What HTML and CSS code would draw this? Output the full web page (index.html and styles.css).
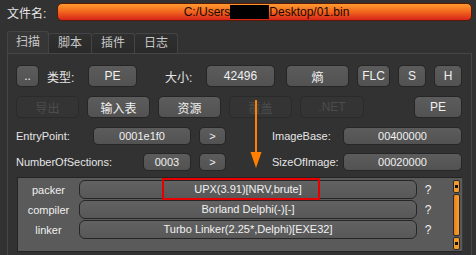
FILE: index.html
```html
<!DOCTYPE html>
<html lang="zh">
<head>
    <meta charset="UTF-8">
    <title>文件扫描</title>
    <link rel="stylesheet" href="styles.css">
</head>
<body>
    <div class="top">
        <span class="file-label">文件名:</span>
        <div class="path-bar">C:/Users<span class="redact"></span>Desktop/01.bin</div>
    </div>

    <div class="tabs">
        <div class="tab active">扫描</div>
        <div class="tab">脚本</div>
        <div class="tab">插件</div>
        <div class="tab">日志</div>
    </div>

    <div class="pane">
        <div class="row row-one">
            <button class="btn w-dots">..</button>
            <span class="lbl lbl-type">类型:</span>
            <button class="btn w-pe">PE</button>
            <span class="lbl lbl-size">大小:</span>
            <button class="btn w-size">42496</button>
            <button class="btn w-entropy">熵</button>
            <button class="btn w-flc">FLC</button>
            <button class="btn w-sq">S</button>
            <button class="btn w-sq">H</button>
        </div>

        <div class="row row-two">
            <button class="btn w-std off">导出</button>
            <button class="btn w-std">输入表</button>
            <button class="btn w-std">资源</button>
            <button class="btn w-std off">覆盖</button>
            <button class="btn w-net off">.NET</button>
            <button class="btn w-pe2">PE</button>
        </div>

        <div class="row row-field">
            <span class="lbl lbl-left">EntryPoint:</span>
            <div class="field w-ep">0001e1f0</div>
            <button class="btn w-go">&gt;</button>
            <span class="lbl lbl-right">ImageBase:</span>
            <div class="field w-right">00400000</div>
        </div>

        <div class="row row-field row-four">
            <span class="lbl lbl-left">NumberOfSections:</span>
            <div class="field w-sec">0003</div>
            <button class="btn w-go">&gt;</button>
            <span class="lbl lbl-right">SizeOfImage:</span>
            <div class="field w-right">00020000</div>
        </div>

        <div class="result">
            <div class="result-rows">
                <div class="res-row">
                    <span class="res-name">packer</span>
                    <div class="res-value">UPX(3.91)[NRV,brute]</div>
                    <span class="res-q">?</span>
                </div>
                <div class="res-row">
                    <span class="res-name">compiler</span>
                    <div class="res-value">Borland Delphi(-)[-]</div>
                    <span class="res-q">?</span>
                </div>
                <div class="res-row">
                    <span class="res-name">linker</span>
                    <div class="res-value">Turbo Linker(2.25*,Delphi)[EXE32]</div>
                    <span class="res-q">?</span>
                </div>
            </div>
            <div class="scroll">
                <div class="scroll-btn"><i></i></div>
                <div class="scroll-track"></div>
                <div class="scroll-btn"><i></i></div>
            </div>
        </div>
    </div>

    <!-- annotations drawn over the screenshot -->
    <div class="mark-box"></div>
    <svg class="mark-arrow" width="14" height="70" viewBox="0 0 14 70">
        <line x1="7" y1="0" x2="7" y2="56" stroke="#ff7f00" stroke-width="2"/>
        <polygon points="1.5,52 12.5,52 7,68" fill="#ff7f00"/>
    </svg>
</body>
</html>
```

FILE: styles.css
```css
* {
    margin: 0;
    padding: 0;
    box-sizing: border-box;
}

html, body {
    width: 476px;
    height: 255px;
    overflow: hidden;
}

body {
    background: #323232;
    color: #e8e8e8;
    font-family: 'Liberation Sans', 'Noto Sans CJK SC', sans-serif;
    font-size: 11px;
    position: relative;
}

/* File name bar */
.top {
    display: flex;
    align-items: center;
    padding: 3px 4px 0 7px;
    height: 21px;
}

.file-label {
    width: 50px;
    font-size: 12px;
    color: #e6e6e6;
}

.path-bar {
    flex: 1;
    height: 18px;
    border-radius: 5px;
    border: 1px solid #5a1a08;
    background: linear-gradient(#ff9a30, #f26a1e 45%, #d8241a);
    color: #1c0800;
    font-size: 12px;
    display: flex;
    align-items: center;
    justify-content: center;
    padding-left: 4px;
}

.redact {
    display: inline-block;
    width: 39px;
    height: 14px;
    background: #000;
}

/* Tabs */
.tabs {
    display: flex;
    margin: 10px 0 0 7px;
    height: 22px;
    align-items: flex-end;
}

.tab {
    width: 43px;
    height: 20px;
    border: 1px solid #444;
    border-bottom: none;
    border-left: none;
    border-radius: 3px 3px 0 0;
    background: linear-gradient(#303030, #2a2a2a);
    color: #c8c8c8;
    font-size: 12px;
    text-align: center;
    line-height: 19px;
}

.tab.active {
    width: 42px;
    height: 22px;
    border-left: 1px solid #444;
    background: #363636;
    line-height: 21px;
}

/* Tab pane */
.pane {
    margin: 0 4px 0 7px;
    border: 1px solid #464646;
    border-bottom: none;
    height: 202px;
    padding: 11px 9px 0 8px;
}

.row {
    display: flex;
    align-items: center;
    height: 22px;
}

.row-two {
    margin-top: 9px;
}

.row-field {
    height: 18px;
    margin-top: 9px;
}

.row-four {
    margin-top: 8px;
}

.btn {
    height: 22px;
    border: 1px solid #262626;
    border-radius: 5px;
    background: linear-gradient(#5c5c5c, #525252);
    color: #f0f0f0;
    font-family: 'Liberation Sans', 'Noto Sans CJK SC', sans-serif;
    font-size: 12px;
    flex-shrink: 0;
}

.btn.off {
    background: #343434;
    border-color: #2a2a2a;
    color: #4c4c4c;
}

.lbl {
    flex-shrink: 0;
    color: #e6e6e6;
    font-size: 12px;
}

.w-dots { width: 23px; }
.lbl-type { width: 33px; margin-left: 8px; }
.w-pe { width: 49px; margin-left: 8px; }
.lbl-size { width: 53px; padding-left: 20px; margin-left: 8px; }
.w-size { width: 69px; margin-left: 8px; }
.w-entropy { width: 63px; margin-left: 11px; }
.w-flc { width: 33px; margin-left: 8px; }
.w-sq { width: 28px; margin-left: 8px; }

.w-std { width: 63px; margin-right: 8px; }
.w-net { width: 64px; }
.w-pe2 { width: 48px; margin-left: auto; }

.field {
    height: 18px;
    border: 1px solid #262626;
    border-radius: 5px;
    background: linear-gradient(#5c5c5c, #525252);
    color: #f0f0f0;
    text-align: center;
    line-height: 16px;
    font-size: 11px;
    flex-shrink: 0;
}

.lbl-left {
    width: 77px;
    font-size: 11px;
}

.w-ep { width: 98px; }
.row-four .lbl-left { width: 127px; }
.w-sec { width: 48px; }
.w-go { width: 27px; height: 18px; margin-left: 8px; font-size: 11px; }
.lbl-right { width: 69px; margin-left: 46px; font-size: 11px; }
.w-right { width: 119px; margin-left: 2px; }

/* Scan results */
.result {
    display: flex;
    margin: 6px 0 0 1px;
    width: 446px;
    height: 75px;
    border: 1px solid #242424;
    border-right-color: #3a3a3a;
    background: #5a5a5a;
    padding: 2px 2px 0 0;
}

.result-rows {
    flex: 1;
    display: flex;
    flex-direction: column;
    gap: 1px;
}

.res-row {
    display: flex;
    align-items: center;
    height: 19px;
}

.res-name {
    width: 61px;
    text-align: center;
    font-size: 11px;
    color: #f0f0f0;
}

.res-value {
    width: 338px;
    height: 19px;
    border: 1px solid #262626;
    border-radius: 6px;
    background: linear-gradient(#626262, #585858);
    color: #f2f2f2;
    font-size: 11px;
    line-height: 17px;
    text-align: center;
}

.res-q {
    width: 22px;
    text-align: center;
    font-size: 12px;
    color: #f0f0f0;
}

.scroll {
    width: 7px;
    height: 70px;
    display: flex;
    flex-direction: column;
    gap: 1px;
}

.scroll-btn {
    height: 13px;
    background: #f39a2a;
    border: 1px solid #2a2a2a;
    border-radius: 2px;
    display: flex;
    align-items: center;
    justify-content: center;
}

.scroll-btn i {
    width: 3px;
    height: 3px;
    background: #111;
}

.scroll-track {
    flex: 1;
    background: linear-gradient(90deg, #e8801a, #f7a030);
    border: 1px solid #2a2a2a;
    border-radius: 2px;
}

/* Annotations */
.mark-box {
    position: absolute;
    left: 162px;
    top: 178px;
    width: 158px;
    height: 22px;
    border: 2px solid #e80000;
}

.mark-arrow {
    position: absolute;
    left: 249px;
    top: 100px;
}
```
